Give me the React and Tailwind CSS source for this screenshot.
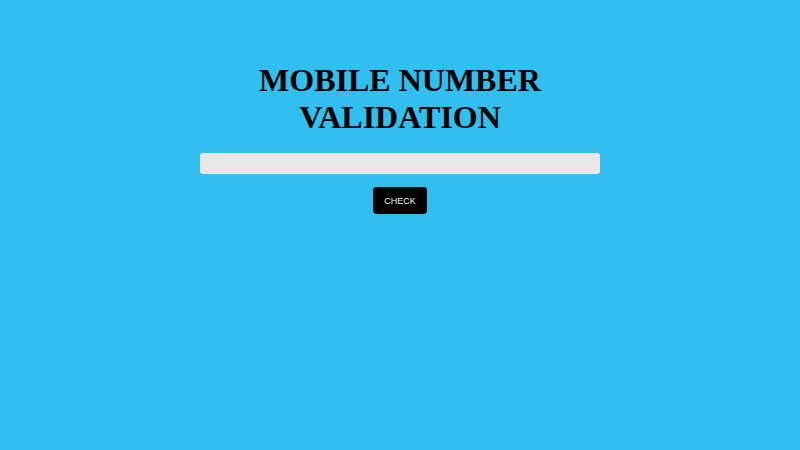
export default function App() {
  return (
    <div className="min-h-screen w-full bg-[#31bfef] flex flex-col items-center pt-[62px]">
      <h1 className="text-center text-[32px] leading-[37px] font-bold text-black font-['Liberation_Serif',serif]">
        MOBILE NUMBER
        <br />
        VALIDATION
      </h1>
      <input
        type="text"
        className="mt-[17px] w-[400px] h-[21px] rounded-[3px] bg-[#e8e6e6] outline-none border-0 px-2"
      />
      <button className="mt-[13px] w-[54px] h-[27px] pt-px rounded-[4px] bg-black text-[#f2f2f2] text-[9px] leading-none font-['Liberation_Sans',sans-serif]">
        CHECK
      </button>
    </div>
  );
}
